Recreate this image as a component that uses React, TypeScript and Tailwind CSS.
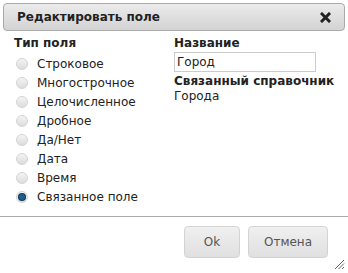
const types = [
  "Строковое",
  "Многострочное",
  "Целочисленное",
  "Дробное",
  "Да/Нет",
  "Дата",
  "Время",
  "Связанное поле",
];

function Radio({ checked }: { checked: boolean }) {
  return (
    <span className="relative flex h-[12px] w-[12px] shrink-0 items-center justify-center rounded-full border border-[#d4d4d4] bg-gradient-to-b from-[#f4f4f4] to-[#dcdcdc]">
      {checked && (
        <span className="h-[6px] w-[6px] rounded-full bg-[#1f5f8a] shadow-[0_0_0_1px_#0e3a5c]" />
      )}
    </span>
  );
}

export default function App() {
  return (
    <div
      className="relative h-[273px] w-[348px] overflow-hidden bg-white text-[12px] text-[#222]"
      style={{ fontFamily: '"DejaVu Sans", Verdana, sans-serif' }}
    >
      <div className="mx-[3px] mt-[3px] flex h-[28px] items-center justify-between rounded-[4px] border border-[#aaaaaa] bg-gradient-to-b from-[#ebebeb] to-[#d3d3d3] pl-[13px] pr-[13px]">
        <span className="font-bold text-[#222]">Редактировать поле</span>
        <svg width="11" height="11" viewBox="0 0 11 11">
          <path d="M2 2 L9 9 M9 2 L2 9" stroke="#222" strokeWidth="3" strokeLinecap="square" />
        </svg>
      </div>

      <div className="flex h-[185px] pt-[5px]">
        <div className="w-[160px] pl-[14px]">
          <div className="font-bold leading-[15px]">Тип поля</div>
          <div className="mt-[3px] flex flex-col">
            {types.map((t, i) => (
              <label key={t} className="flex h-[19px] items-center gap-[9px] pl-[2px]">
                <Radio checked={i === types.length - 1} />
                <span className="text-[#222]">{t}</span>
              </label>
            ))}
          </div>
        </div>
        <div className="flex flex-col pl-[14px]">
          <div className="font-bold leading-[15px]">Название</div>
          <div className="mt-[1px] flex h-[20px] w-[142px] items-center border border-[#cccccc] bg-white px-[2px] text-[#222]">
            Город
          </div>
          <div className="mt-[2px] font-bold leading-[15px]">Связанный справочник</div>
          <div className="leading-[15px] text-[#222]">Города</div>
        </div>
      </div>

      <div className="border-t border-[#aaaaaa]" />

      <div className="flex justify-end gap-[8px] pr-[20px] pt-[9px]">
        <button className="h-[32px] w-[56px] rounded-[4px] border border-[#d3d3d3] bg-gradient-to-b from-[#f0f0f0] to-[#e0e0e0] text-[#555]">
          Ok
        </button>
        <button className="h-[32px] w-[80px] rounded-[4px] border border-[#d3d3d3] bg-gradient-to-b from-[#f0f0f0] to-[#e0e0e0] text-[#555]">
          Отмена
        </button>
      </div>

      <svg className="absolute bottom-[3px] right-[3px]" width="11" height="11" viewBox="0 0 11 11">
        <path d="M10 1 L1 10 M10 4.5 L4.5 10 M10 8 L8 10" stroke="#666" strokeWidth="1" />
      </svg>
    </div>
  );
}
